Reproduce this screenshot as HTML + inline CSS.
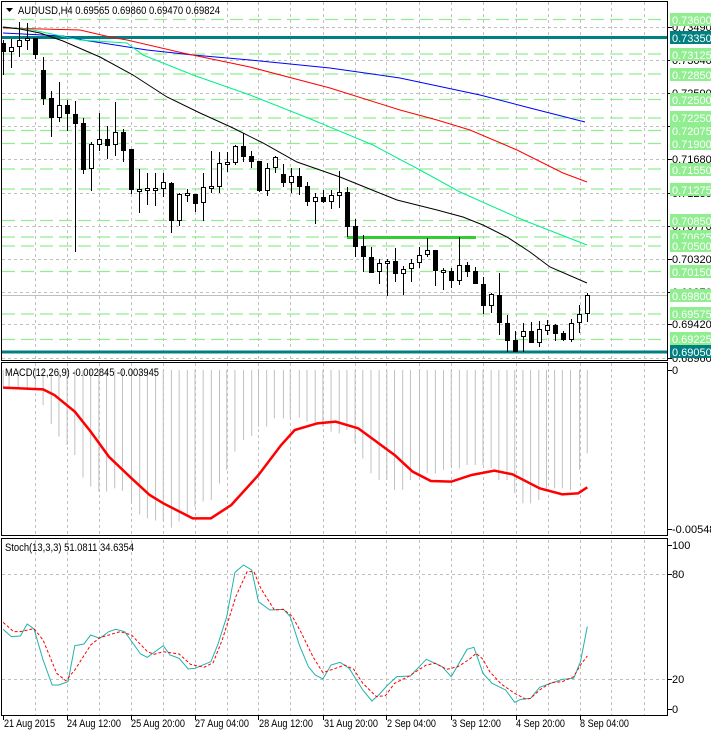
<!DOCTYPE html>
<html><head><meta charset="utf-8"><style>
html,body{margin:0;padding:0;background:#fff;width:711px;height:733px;overflow:hidden}
svg{display:block;font-family:"Liberation Sans",sans-serif;font-size:11px}
</style></head><body>
<svg width="711" height="733" viewBox="0 0 711 733" xmlns="http://www.w3.org/2000/svg">
<rect width="711" height="733" fill="#fff"/>
<!-- vertical grid -->
<g stroke="#c0c0c0" stroke-dasharray="3,3" stroke-width="1">
<path d="M35.5 2V361M67.5 2V361M99.5 2V361M131.5 2V361M163.5 2V361M195.5 2V361M227.5 2V361M258.5 2V361M290.5 2V361M323.5 2V361M355.5 2V361M386.5 2V361M419.5 2V361M451.5 2V361M483.5 2V361M516.5 2V361M548.5 2V361M580.5 2V361M611.5 2V361M644.5 2V361"/>
<path d="M35.5 363V536M67.5 363V536M99.5 363V536M131.5 363V536M163.5 363V536M195.5 363V536M227.5 363V536M258.5 363V536M290.5 363V536M323.5 363V536M355.5 363V536M386.5 363V536M419.5 363V536M451.5 363V536M483.5 363V536M516.5 363V536M548.5 363V536M580.5 363V536M611.5 363V536M644.5 363V536"/>
<path d="M35.5 540V715M67.5 540V715M99.5 540V715M131.5 540V715M163.5 540V715M195.5 540V715M227.5 540V715M258.5 540V715M290.5 540V715M323.5 540V715M355.5 540V715M386.5 540V715M419.5 540V715M451.5 540V715M483.5 540V715M516.5 540V715M548.5 540V715M580.5 540V715M611.5 540V715M644.5 540V715"/>
<path d="M2 27.5H667M2 60.5H667M2 93.5H667M2 126.5H667M2 159.5H667M2 193.5H667M2 226.5H667M2 259.5H667M2 292.5H667M2 324.5H667M2 358.5H667"/>
<path d="M2 574.5H667M2 679.5H667"/>
</g>
<!-- green level lines -->
<g stroke="#90ee90" stroke-width="1.3" stroke-dasharray="13,6">
<path d="M2 19.5H667M2 54H667M2 74H667M2 99.5H667M2 118H667M2 130.5H667M2 143.5H667M2 169H667M2 189H667M2 220.5H667M2 237H667M2 246H667M2 271.5H667M2 314H667M2 339.5H667"/>
</g>
<path d="M2 295.5H667" stroke="#c0c0c0"/>
<path d="M2 37.5H668M2 352H668" stroke="#008080" stroke-width="3"/>
<!-- MAs -->
<g fill="none" stroke-width="1">
<polyline stroke="#0000ff" points="3,33 63,36 83,40 147,50 193,55 250,60 330,68 400,78 480,95 530,108 585,122"/>
<polyline stroke="#ff0000" points="3,28 80,30 110,37 127,40 183,53 250,67 330,88 400,110 437,120 470,130 517,150 563,173 587,182"/>
<polyline stroke="#00f08a" points="3,27 33,30 80,40 127,43 143,55 193,75 250,95 313,120 373,145 420,170 460,192 523,220 587,245"/>
<polyline stroke="#000" points="3,27 20,29 40,33 63,41 100,57 133,75 167,97 200,113 233,128 263,143 297,162 320,170 340,177 377,192 397,200 417,205 437,210 463,217 483,225 507,237 530,252 550,267 587,283"/>
</g>
<path d="M347 237.5H476" stroke="#32cd32" stroke-width="3"/>
<!-- candles -->
<g id="c" stroke="#000" stroke-width="1">
<path d="M3.5 40V75M11.5 39V68M19.5 22V57M27.5 23V50M35.5 38V59M43.5 57V105M51.5 91V137M59.5 82V122M67.5 100V131M75.5 101V252M83.5 118V174M91.5 142V191M99.5 113V151M107.5 126V159M115.5 102V156M123.5 129V162M131.5 149V194M139.5 169V213M147.5 173V205M155.5 173V206M163.5 173V197M171.5 182V233M179.5 193V226M187.5 189V202M195.5 194V212M203.5 173V221M211.5 151V193M219.5 152V193M227.5 152V172M235.5 145V165M243.5 133V162M251.5 151V168M259.5 161V192M267.5 163V196M275.5 156V173M283.5 164V187M291.5 168V193M299.5 168V195M307.5 182V206M315.5 193V224M323.5 190V203M331.5 190V209M339.5 171V208M347.5 187V237M355.5 219V257M363.5 235V272M371.5 247V273M379.5 259V284M387.5 259V296M395.5 248V282M403.5 266V295M411.5 259V282M419.5 247V268M427.5 238V257M435.5 250V286M443.5 268V290M451.5 268V288M459.5 237V285M467.5 262V277M475.5 267V284M483.5 277V314M491.5 293V313M499.5 273V335M507.5 315V352M515.5 331V352M523.5 323V352M531.5 322V343M539.5 321V347M547.5 320V335M555.5 324V341M563.5 331V341M571.5 319V342M579.5 305V333M587.5 293V322"/>
</g>
<g fill="#000">
<rect x="1" y="43" width="5" height="9"/><rect x="33" y="38" width="5" height="17"/><rect x="41" y="70" width="5" height="29"/><rect x="49" y="98" width="5" height="20"/><rect x="65" y="105" width="5" height="9"/><rect x="73" y="114" width="5" height="10"/><rect x="81" y="123" width="5" height="47"/><rect x="105" y="139" width="5" height="7"/><rect x="121" y="132" width="5" height="19"/><rect x="129" y="149" width="5" height="41"/><rect x="169" y="183" width="5" height="38"/><rect x="193" y="194" width="5" height="10"/><rect x="241" y="146" width="5" height="11"/><rect x="249" y="156" width="5" height="6"/><rect x="257" y="161" width="5" height="30"/><rect x="281" y="174" width="5" height="9"/><rect x="297" y="176" width="5" height="11"/><rect x="305" y="186" width="5" height="16"/><rect x="321" y="197" width="5" height="5"/><rect x="345" y="192" width="5" height="35"/><rect x="353" y="226" width="5" height="21"/><rect x="361" y="246" width="5" height="11"/><rect x="369" y="257" width="5" height="16"/><rect x="393" y="261" width="5" height="13"/><rect x="433" y="250" width="5" height="21"/><rect x="449" y="271" width="5" height="10"/><rect x="465" y="265" width="5" height="7"/><rect x="473" y="271" width="5" height="13"/><rect x="481" y="284" width="5" height="22"/><rect x="497" y="295" width="5" height="28"/><rect x="505" y="323" width="5" height="18"/><rect x="513" y="340" width="5" height="12"/><rect x="529" y="331" width="5" height="12"/><rect x="553" y="325" width="5" height="9"/><rect x="561" y="333" width="5" height="7"/>
</g>
<g fill="#fff" stroke="#000">
<rect x="9.5" y="47.5" width="4" height="4"/><rect x="17.5" y="40.5" width="4" height="6"/><rect x="25.5" y="38.5" width="4" height="2"/><rect x="57.5" y="105.5" width="4" height="12"/><rect x="89.5" y="144.5" width="4" height="24"/><rect x="97.5" y="139.5" width="4" height="5"/><rect x="113.5" y="132.5" width="4" height="12"/><rect x="137.5" y="189.5" width="4" height="2"/><rect x="145.5" y="188.5" width="4" height="2"/><rect x="153.5" y="188.5" width="4" height="2"/><rect x="161.5" y="182.5" width="4" height="6"/><rect x="177.5" y="194.5" width="4" height="26"/><rect x="185.5" y="193.5" width="4" height="2"/><rect x="201.5" y="187.5" width="4" height="15"/><rect x="209.5" y="186.5" width="4" height="2"/><rect x="217.5" y="163.5" width="4" height="23"/><rect x="225.5" y="162.5" width="4" height="2"/><rect x="233.5" y="146.5" width="4" height="16"/><rect x="265.5" y="168.5" width="4" height="22"/><rect x="273.5" y="157.5" width="4" height="10"/><rect x="289.5" y="176.5" width="4" height="6"/><rect x="313.5" y="197.5" width="4" height="4"/><rect x="329.5" y="195.5" width="4" height="6"/><rect x="337.5" y="192.5" width="4" height="3"/><rect x="377.5" y="263.5" width="4" height="8"/><rect x="385.5" y="261.5" width="4" height="2"/><rect x="401.5" y="269.5" width="4" height="4"/><rect x="409.5" y="263.5" width="4" height="5"/><rect x="417.5" y="255.5" width="4" height="7"/><rect x="425.5" y="250.5" width="4" height="4"/><rect x="441.5" y="270.5" width="4" height="2"/><rect x="457.5" y="265.5" width="4" height="15"/><rect x="489.5" y="294.5" width="4" height="11"/><rect x="521.5" y="331.5" width="4" height="5"/><rect x="537.5" y="329.5" width="4" height="13"/><rect x="545.5" y="325.5" width="4" height="5"/><rect x="569.5" y="323.5" width="4" height="16"/><rect x="577.5" y="314.5" width="4" height="8"/><rect x="585.5" y="295.5" width="4" height="18"/>
</g>
<!-- MACD -->
<g transform="translate(0,355) scale(0.4535,0.3333)">
<path vector-effect="non-scaling-stroke" stroke="#c0c0c0" stroke-width="1" fill="none" d="M7 45V100M20 45V100M40 45V103M60 45V105M78 45V105M95 45V150M113 45V207M130 45V245M148 45V270M165 45V300M183 45V368M200 45V395M218 45V410M235 45V410M253 45V400M270 45V408M290 45V440M308 45V478M325 45V490M343 45V497M360 45V497M378 45V518M395 45V500M413 45V480M430 45V455M448 45V440M466 45V435M484 45V385M500 45V345M518 45V290M537 45V255M555 45V243M570 45V215M588 45V215M605 45V190M625 45V190M640 45V188M660 45V188M677 45V200M695 45V210M712 45V215M730 45V230M748 45V235M765 45V225M783 45V262M800 45V310M818 45V355M836 45V375M853 45V375M870 45V405M888 45V405M905 45V375M925 45V365M942 45V355M960 45V355M978 45V345M995 45V335M1013 45V340M1030 45V330M1048 45V330M1065 45V330M1083 45V340M1100 45V375M1118 45V375M1135 45V415M1153 45V445M1170 45V445M1188 45V435M1205 45V400M1223 45V400M1240 45V400M1258 45V405M1278 45V345M1295 45V295"/>
<polyline vector-effect="non-scaling-stroke" fill="none" stroke="#ff0000" stroke-width="2.5" points="7,98 95,103 120,120 165,170 200,230 240,305 290,370 330,420 360,445 425,490 465,490 510,450 570,360 620,270 650,225 700,205 740,200 790,220 830,260 870,300 910,350 950,378 995,380 1040,360 1090,347 1130,358 1190,400 1240,418 1275,415 1295,397"/>
</g>
<!-- Stoch -->
<g transform="translate(0,530) scale(0.4535,0.3333)">
<polyline vector-effect="non-scaling-stroke" fill="none" stroke="#20b2aa" stroke-width="1" points="7,298 25,320 45,318 60,282 75,297 95,390 115,465 130,465 150,455 165,347 185,342 200,315 220,325 240,305 255,298 275,305 310,372 325,382 360,347 375,375 395,385 415,417 430,415 465,395 480,345 500,260 518,127 537,105 555,120 570,215 595,240 625,238 640,260 660,345 680,410 695,435 712,447 730,405 750,397 770,415 800,480 820,513 835,495 855,465 875,440 905,438 940,388 975,410 995,440 1030,358 1045,352 1065,430 1085,460 1115,480 1135,517 1148,508 1170,505 1190,472 1210,462 1240,448 1265,445 1280,395 1295,290"/>
<polyline vector-effect="non-scaling-stroke" fill="none" stroke="#ff0000" stroke-width="1" stroke-dasharray="3,2" points="7,277 30,305 45,305 75,296 95,330 125,430 145,452 165,420 200,345 220,323 265,305 290,315 325,365 340,373 360,365 395,372 420,403 450,412 470,398 490,330 520,200 545,125 560,125 575,175 605,240 625,238 645,260 665,310 690,380 712,428 740,415 760,405 780,418 800,460 830,500 850,497 870,460 900,440 940,405 960,400 985,418 1010,410 1035,388 1050,370 1065,388 1080,425 1105,462 1135,490 1160,508 1170,505 1190,480 1215,458 1240,455 1265,440 1280,405 1295,378"/>
</g>
<!-- frames -->
<g fill="none" stroke="#000" stroke-width="1">
<rect x="1.5" y="1.5" width="666" height="359"/>
<rect x="1.5" y="362.5" width="666" height="173"/>
<rect x="1.5" y="538.5" width="666" height="177"/>
<path d="M668 27.5h4M668 60.5h4M668 93.5h4M668 126.5h4M668 159.5h4M668 193.5h4M668 226.5h4M668 259.5h4M668 292.5h4M668 324.5h4M668 358.5h4M668 370.5h4M668 529.5h4M668 545.5h4M668 574.5h4M668 679.5h4M668 709.5h4M3.5 716v4M67.5 716v4M131.5 716v4M195.5 716v4M258.5 716v4M323.5 716v4M386.5 716v4M451.5 716v4M516.5 716v4M580.5 716v4"/>
</g>
<!-- axis text -->
<g fill="#000" font-size="11">
<text x="672" y="31">0.73490</text><text x="672" y="64">0.73040</text><text x="672" y="97">0.72590</text><text x="672" y="130">0.72140</text><text x="672" y="163">0.71680</text><text x="672" y="197">0.71230</text><text x="672" y="230">0.70770</text><text x="672" y="263">0.70320</text><text x="672" y="296">0.69870</text><text x="672" y="328">0.69420</text><text x="672" y="362">0.68960</text>
<text x="672" y="374">0</text><text x="672" y="533">-0.005488</text>
<text x="672" y="549">100</text><text x="672" y="578">80</text><text x="672" y="683">20</text><text x="672" y="713">0</text>
</g>
<g font-size="11" fill="#fff">
<rect x="670" y="13" width="41" height="13" fill="#90ee90"/><text x="672" y="24" fill="#fff">0.73600</text>
<rect x="670" y="31" width="41" height="13" fill="#008080"/><text x="672" y="42">0.73350</text>
<rect x="670" y="48" width="41" height="13" fill="#90ee90"/><text x="672" y="59">0.73125</text>
<rect x="670" y="68" width="41" height="13" fill="#90ee90"/><text x="672" y="79">0.72850</text>
<rect x="670" y="93" width="41" height="13" fill="#90ee90"/><text x="672" y="104">0.72500</text>
<rect x="670" y="111" width="41" height="13" fill="#90ee90"/><text x="672" y="122">0.72250</text>
<rect x="670" y="124" width="41" height="13" fill="#90ee90"/><text x="672" y="135">0.72075</text>
<rect x="670" y="137" width="41" height="13" fill="#90ee90"/><text x="672" y="148">0.71900</text>
<rect x="670" y="163" width="41" height="13" fill="#90ee90"/><text x="672" y="174">0.71550</text>
<rect x="670" y="183" width="41" height="13" fill="#90ee90"/><text x="672" y="194">0.71275</text>
<rect x="670" y="214" width="41" height="13" fill="#90ee90"/><text x="672" y="225">0.70850</text>
<rect x="670" y="230" width="41" height="13" fill="#90ee90"/><text x="672" y="241">0.70625</text>
<rect x="670" y="239" width="41" height="13" fill="#90ee90"/><text x="672" y="250">0.70500</text>
<rect x="670" y="265" width="41" height="13" fill="#90ee90"/><text x="672" y="276">0.70150</text>
<rect x="670" y="289" width="41" height="13" fill="#90ee90"/><text x="672" y="300">0.69800</text>
<rect x="670" y="307" width="41" height="13" fill="#90ee90"/><text x="672" y="318">0.69575</text>
<rect x="670" y="332" width="41" height="13" fill="#90ee90"/><text x="672" y="343">0.69225</text>
<rect x="670" y="345" width="41" height="13" fill="#008080"/><text x="672" y="356">0.69050</text>
</g>
<!-- titles -->
<path d="M6 8h7l-3.5 4z" fill="#000"/>
<text x="18" y="14" font-size="11" textLength="202" lengthAdjust="spacingAndGlyphs">AUDUSD,H4  0.69565 0.69860 0.69470 0.69824</text>
<text x="5" y="376" font-size="11" textLength="154" lengthAdjust="spacingAndGlyphs">MACD(12,26,9) -0.002845 -0.003945</text>
<text x="5" y="551" font-size="11" textLength="129" lengthAdjust="spacingAndGlyphs">Stoch(13,3,3) 51.0811 34.6354</text>
<g font-size="11">
<text x="4" y="727" textLength="51" lengthAdjust="spacingAndGlyphs">21 Aug 2015</text>
<text x="67" y="727" textLength="54" lengthAdjust="spacingAndGlyphs">24 Aug 12:00</text>
<text x="131" y="727" textLength="54" lengthAdjust="spacingAndGlyphs">25 Aug 20:00</text>
<text x="195" y="727" textLength="54" lengthAdjust="spacingAndGlyphs">27 Aug 04:00</text>
<text x="259" y="727" textLength="54" lengthAdjust="spacingAndGlyphs">28 Aug 12:00</text>
<text x="324" y="727" textLength="54" lengthAdjust="spacingAndGlyphs">31 Aug 20:00</text>
<text x="387" y="727" textLength="49" lengthAdjust="spacingAndGlyphs">2 Sep 04:00</text>
<text x="452" y="727" textLength="49" lengthAdjust="spacingAndGlyphs">3 Sep 12:00</text>
<text x="516" y="727" textLength="49" lengthAdjust="spacingAndGlyphs">4 Sep 20:00</text>
<text x="580" y="727" textLength="49" lengthAdjust="spacingAndGlyphs">8 Sep 04:00</text>
</g>
</svg>
</body></html>
